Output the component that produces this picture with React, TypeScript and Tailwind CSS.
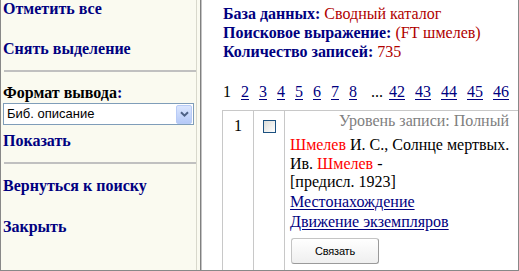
import React from "react"

const serif = "font-['Liberation_Serif','Times_New_Roman',serif]"
const sans = "font-['Liberation_Sans',Arial,sans-serif]"

const pages = ["2", "3", "4", "5", "6", "7", "8"]
const lastPages = ["42", "43", "44", "45", "46"]

function SideLink({ children, className = "" }: { children: React.ReactNode; className?: string }) {
  return (
    <div className={`h-[18px] leading-[18px] text-[16px] font-bold text-[#000080] whitespace-nowrap ${className}`}>
      {children}
    </div>
  )
}

function Rule({ className = "" }: { className?: string }) {
  return <div className={`ml-[1px] mr-0 h-[2px] bg-[#c0c0c0] ${className}`} />
}

function FormatSelect() {
  return (
    <div className={`mt-px ml-0 mr-[2px] h-[22px] flex items-center bg-white border border-[#7f9db9] ${sans}`}>
      <span className="flex-1 pl-[3px] text-[13px] leading-[20px] text-black">Биб. описание</span>
      <div className="mr-px w-[16px] h-[19px] rounded-[2px] border border-[#b8cbf6] bg-gradient-to-b from-[#dbe6fe] to-[#b5c9f7] flex items-center justify-center">
        <svg width="9" height="6" viewBox="0 0 9 6">
          <path d="M1 1.2 L4.5 4.6 L8 1.2" fill="none" stroke="#4d6185" strokeWidth="2" />
        </svg>
      </div>
    </div>
  )
}

function Checkbox() {
  return (
    <div className="ml-[9px] mt-[9px] w-[13px] h-[13px] border border-[#1c5180] bg-gradient-to-br from-[#dcdcd7] to-white" />
  )
}

export default function App() {
  return (
    <div className={`w-[519px] h-[271px] flex overflow-hidden border-l border-r border-b border-[#888888] bg-white ${serif}`}>
      {/* left frame */}
      <aside className="w-[195px] shrink-0 bg-[#fafaf0] pl-[2px] flex flex-col">
        <SideLink>Отметить все</SideLink>
        <SideLink className="mt-[22px]">Снять выделение</SideLink>
        <Rule className="mt-[12px]" />
        <div className="mt-[12px] h-[18px] leading-[18px] text-[16px] font-bold text-black whitespace-nowrap">
          Формат вывода<span className="text-[#000080]">:</span>
        </div>
        <FormatSelect />
        <SideLink className="mt-[7px]">Показать</SideLink>
        <Rule className="mt-[12px]" />
        <SideLink className="mt-[13px]">Вернуться к поиску</SideLink>
        <SideLink className="mt-[23px]">Закрыть</SideLink>
      </aside>

      {/* frame splitter */}
      <div className="w-[6px] shrink-0 bg-[#fafaf0] border-l border-[#d8d8cc] flex justify-end">
        <div className="w-px bg-[#808080]" />
        <div className="w-px bg-[#c4c4c4]" />
      </div>

      {/* right frame */}
      <main className="flex-1 min-w-0 bg-white">
        <div className="pl-[21px] pt-[4px] text-[16px] leading-[19px] whitespace-nowrap">
          <div>
            <b className="text-[#000080]">База данных:</b> <span className="text-[#b00000]">Сводный каталог</span>
          </div>
          <div>
            <b className="text-[#000080]">Поисковое выражение:</b> <span className="text-[#b00000]">(FT шмелев)</span>
          </div>
          <div>
            <b className="text-[#000080]">Количество записей:</b> <span className="text-[#b00000]">735</span>
          </div>
        </div>

        <div className="mt-[21px] pl-[21px] flex text-[16px] leading-[19px] whitespace-nowrap">
          <span className="mr-[10px] text-black">1</span>
          {pages.map((p) => (
            <a key={p} className="mr-[10px] text-[#000080] underline underline-offset-2">
              {p}
            </a>
          ))}
          <span className="ml-[4px] mr-[6px] text-black">...</span>
          {lastPages.map((p) => (
            <a key={p} className="mr-[10px] text-[#000080] underline underline-offset-2">
              {p}
            </a>
          ))}
        </div>

        <div className="mt-[9px] ml-[20px] h-[200px] flex border-t border-l border-[#c8c8c8]">
          <div className="w-[31px] shrink-0 border-r border-[#c8c8c8] pt-[5px] text-center text-[16px] leading-[19px] text-black">
            1
          </div>
          <div className="w-[31px] shrink-0 border-r border-[#c8c8c8]">
            <Checkbox />
          </div>
          <div className="flex-1 min-w-0 pl-[5px] pr-[9px] text-[16px] text-black whitespace-nowrap">
            <div className="text-right leading-[19px] text-[#808080]">Уровень записи: Полный</div>
            <div className="mt-[5px] leading-[19px]">
              <span className="text-[#ff0000]">Шмелев</span> И. С., Солнце мертвых.
            </div>
            <div className="mt-[1px] leading-[18px]">
              Ив. <span className="text-[#ff0000]">Шмелев</span> -
            </div>
            <div className="leading-[18px]">[предисл. 1923]</div>
            <div className="mt-[1px] leading-[20px]">
              <a className="text-[#000080] underline underline-offset-2">Местонахождение</a>
            </div>
            <div className="leading-[20px]">
              <a className="text-[#000080] underline underline-offset-2">Движение экземпляров</a>
            </div>
            <button
              className={`mt-[6px] ml-px w-[88px] h-[26px] rounded-[3px] border border-[#c4c4c4] border-r-[#9a9a9a] border-b-[#9a9a9a] bg-gradient-to-b from-white to-[#efefef] text-[11px] tracking-[-0.2px] text-black ${sans}`}
            >
              Связать
            </button>
          </div>
        </div>
      </main>
    </div>
  )
}
